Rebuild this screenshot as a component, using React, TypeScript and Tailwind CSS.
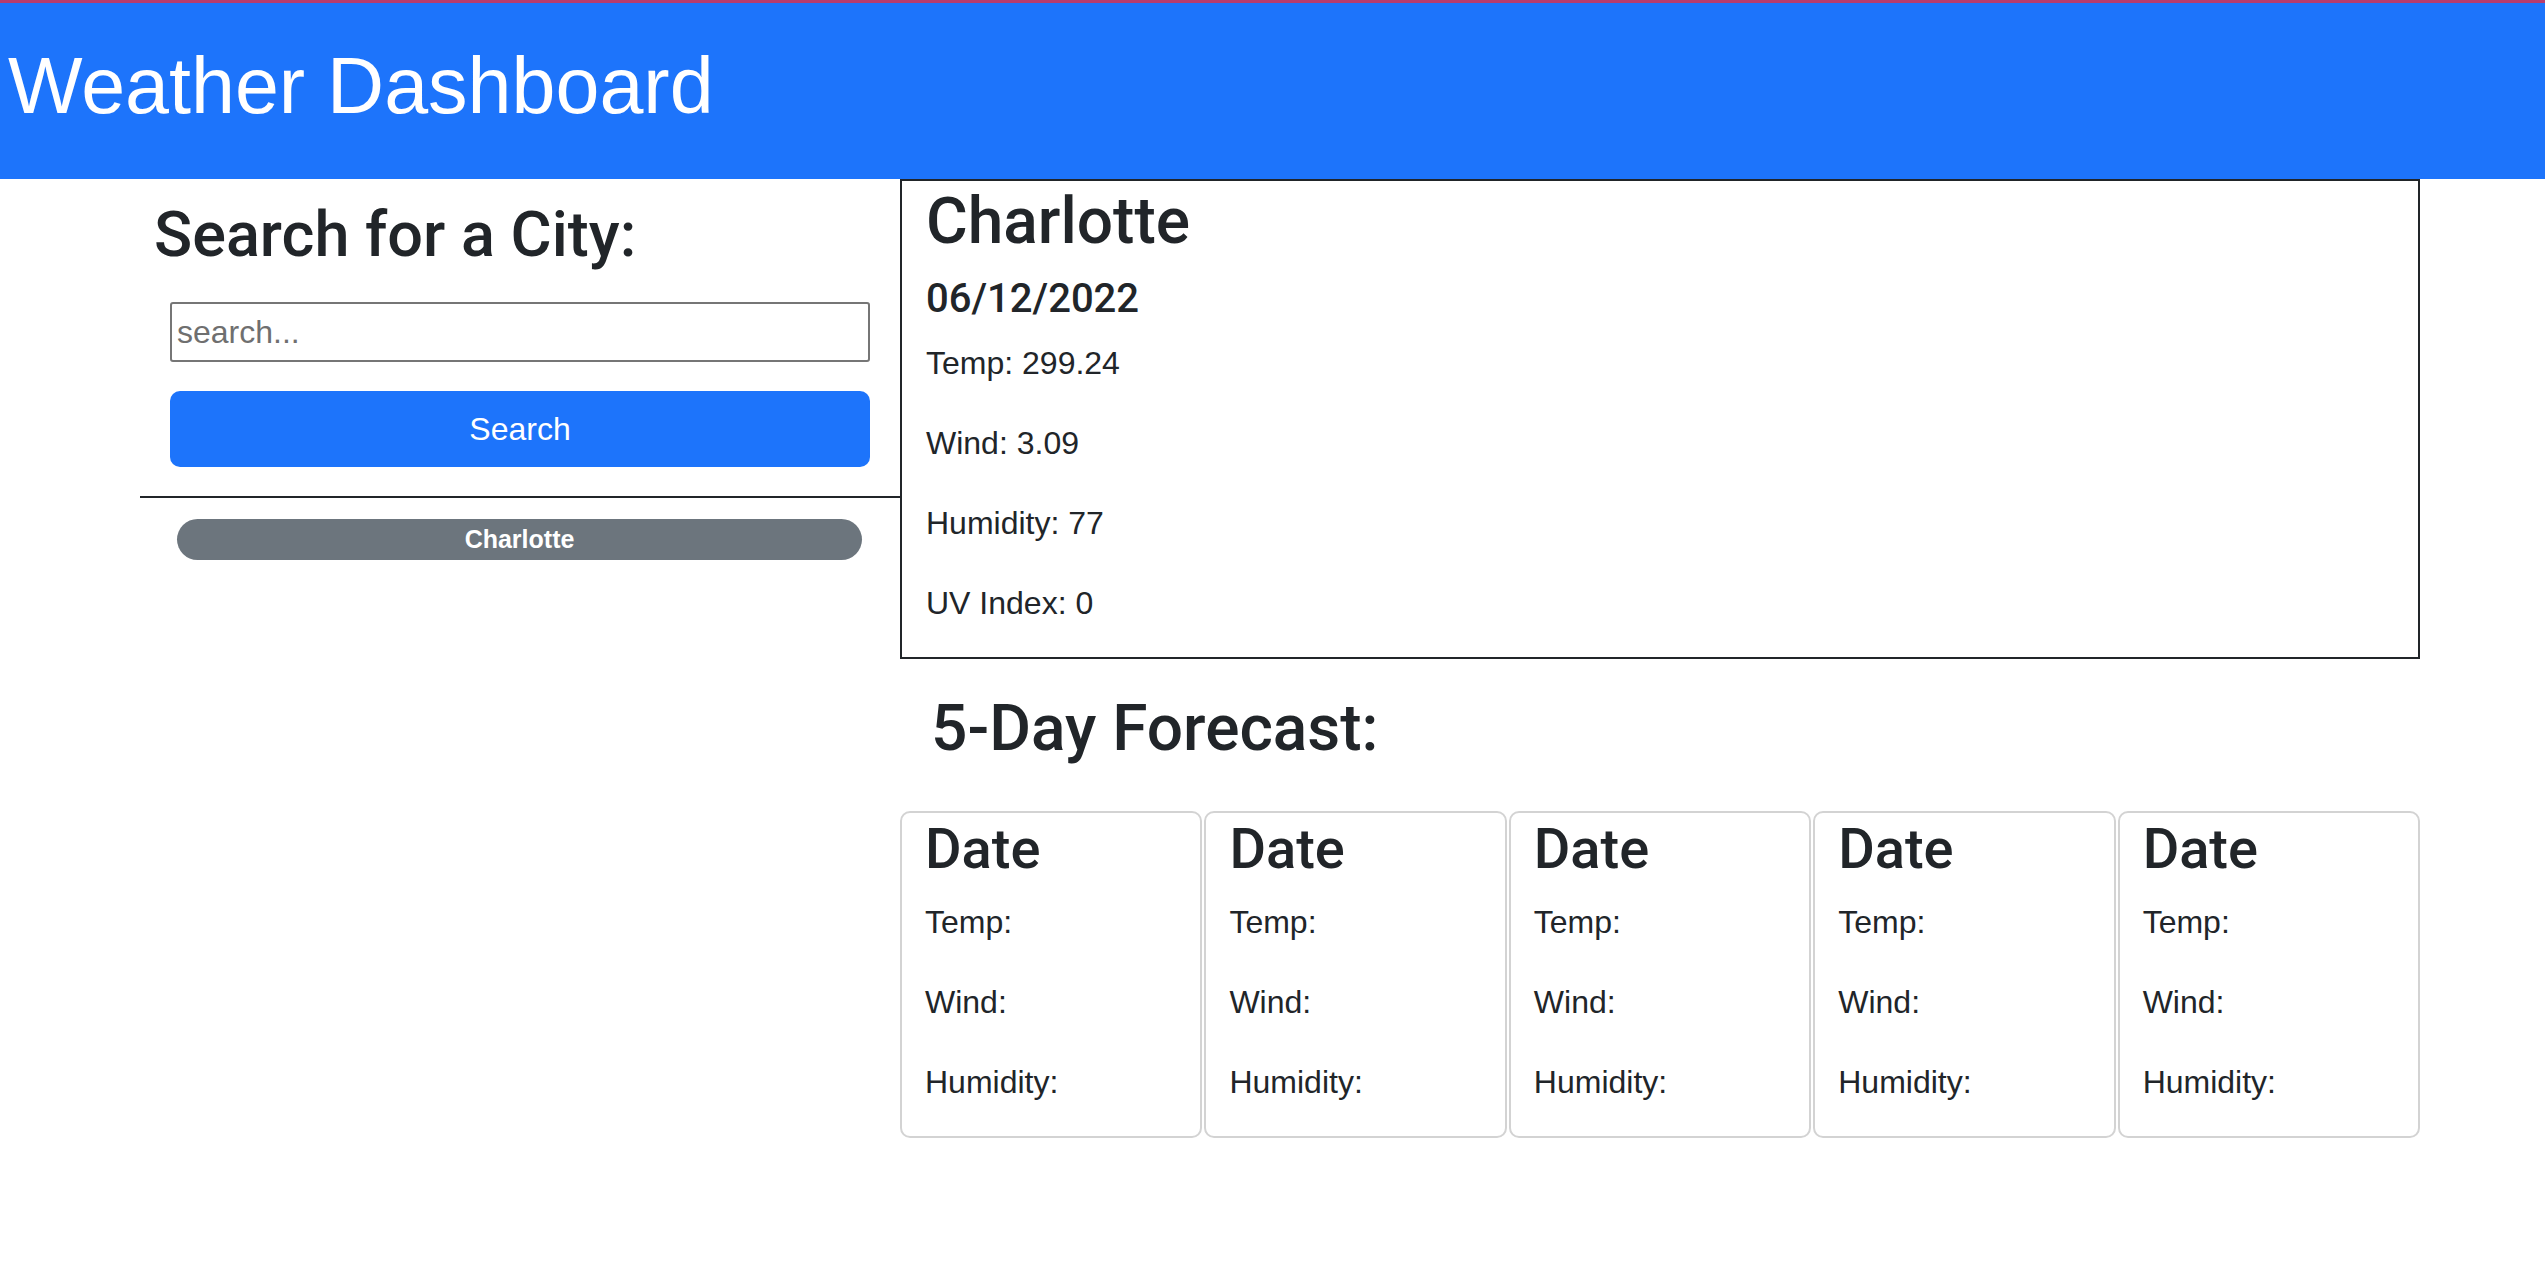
import React from "react";

const days = [0, 1, 2, 3, 4];

export default function App() {
  return (
    <div className="min-h-screen bg-white font-['Liberation_Sans',Arial,sans-serif] text-[#212529]">
      <header className="h-[179px] border-t-[3px] border-[#b83c6e] bg-[#1d74fb] pt-[43px] pl-[8px]">
        <h1 className="text-[79px] leading-[79px] text-white">Weather Dashboard</h1>
      </header>

      <div className="flex pl-[140px]">
        <aside className="w-[760px] shrink-0">
          <h2 className="mt-[18px] pl-[14px] font-['Roboto',Arial,sans-serif] text-[63px] leading-[76px] font-medium">
            Search for a City:
          </h2>
          <input
            type="text"
            placeholder="search..."
            className="mx-[30px] mt-[29px] block h-[60px] w-[700px] rounded-[3px] border-2 border-[#767676] pl-[5px] text-[32px] outline-none placeholder:text-[#6f6f6f]"
          />
          <button className="mx-[30px] mt-[29px] block h-[76px] w-[700px] rounded-[10px] bg-[#1d74fb] text-[32px] text-white">
            Search
          </button>
          <div className="mt-[29px] border-t-2 border-[#212529]" />
          <button className="ml-[37px] mt-[21px] block h-[41px] w-[685px] rounded-full bg-[#6c757d] text-[25px] font-bold leading-[41px] text-white">
            Charlotte
          </button>
        </aside>

        <main className="w-[1520px] shrink-0">
          <section className="border-2 border-[#212529] px-[24px] pt-[4px]">
            <h2 className="mb-[15px] font-['Roboto',Arial,sans-serif] text-[64px] leading-[74px] font-medium">Charlotte</h2>
            <h3 className="mb-[15px] font-['Roboto',Arial,sans-serif] text-[40px] leading-[50px] font-medium">06/12/2022</h3>
            <p className="mb-[32px] text-[32px] leading-[48px]">Temp: 299.24</p>
            <p className="mb-[32px] text-[32px] leading-[48px]">Wind: 3.09</p>
            <p className="mb-[32px] text-[32px] leading-[48px]">Humidity: 77</p>
            <p className="mb-[30px] text-[32px] leading-[48px]">UV Index: 0</p>
          </section>

          <h2 className="mt-[33px] pl-[31px] font-['Roboto',Arial,sans-serif] text-[64px] leading-[74px] font-medium">
            5-Day Forecast:
          </h2>

          <div className="mt-[45px] flex gap-[2px]">
            {days.map((d) => (
              <div
                key={d}
                className="h-[327px] flex-1 rounded-[10px] border-2 border-[#d3d3d3] px-[23px] pt-[4px]"
              >
                <h3 className="mb-[17px] font-['Roboto',Arial,sans-serif] text-[56px] leading-[64px] font-medium">Date</h3>
                <p className="mb-[32px] text-[32px] leading-[48px]">Temp:</p>
                <p className="mb-[32px] text-[32px] leading-[48px]">Wind:</p>
                <p className="text-[32px] leading-[48px]">Humidity:</p>
              </div>
            ))}
          </div>
        </main>
      </div>
    </div>
  );
}
